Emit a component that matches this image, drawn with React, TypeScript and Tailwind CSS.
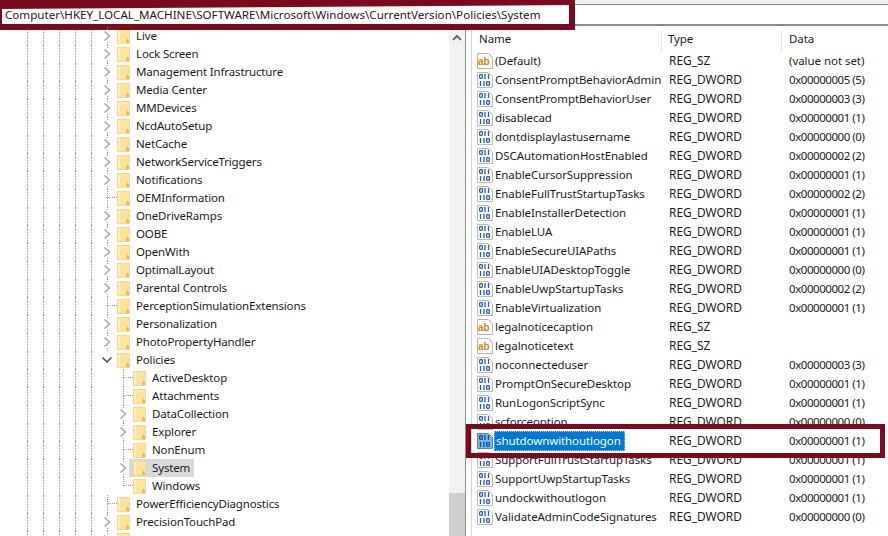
import React from "react";

const FONT = "font-['Noto_Sans','Open_Sans',sans-serif]";

function Folder() {
  return (
    <svg width="13" height="15" viewBox="0 0 13 15" className="shrink-0 block">
      <path d="M0.5 0.5H12.5V14.5H0.5Z" fill="#fce49c" stroke="#f5d88a" />
      <path d="M1 1H3V14H1Z" fill="#fdeec0" />
      <path d="M9 14V11H10V9.5H11V11H12V14Z" fill="#e6bb5c" />
    </svg>
  );
}

function Chevron({ down }: { down?: boolean }) {
  return (
    <svg width="10" height="10" viewBox="0 0 10 10" className="block bg-white">
      {down ? (
        <path d="M0.5 2.5L5 7L9.5 2.5" fill="none" stroke="#404040" strokeWidth="1.4" />
      ) : (
        <path d="M2.5 0.5L7.5 5L2.5 9.5" fill="none" stroke="#a0a0a0" strokeWidth="1.4" />
      )}
    </svg>
  );
}

function SzIcon() {
  return (
    <svg width="16" height="16" viewBox="0 0 16 16" className="block shrink-0">
      <path d="M0.5 0.5H11.5L15.5 4.5V15.5H0.5Z" fill="#fff" stroke="#b4b4b4" />
      <text x="1" y="11.5" fontSize="10" fontWeight="700" fill="#d9821e" fontFamily="Liberation Sans, sans-serif">ab</text>
    </svg>
  );
}

function BinIcon({ selected }: { selected?: boolean }) {
  const c = selected ? "#0f4f9c" : "#2a5cab";
  return (
    <svg width="16" height="16" viewBox="0 0 16 16" className="block shrink-0">
      <path d="M0.5 0.5H11.5L15.5 4.5V15.5H0.5Z" fill={selected ? "#7fb2e5" : "#fff"} stroke={selected ? "#4a8bd0" : "#b4bcc8"} />
      <g fill="none" stroke={c} strokeWidth="1.3">
        <rect x="2.65" y="2.65" width="2.7" height="3.7" rx="0.8" />
        <path d="M8 2V7M11.5 2V7" />
        <path d="M3.5 9V14M7 9V14" />
        <rect x="9.65" y="9.65" width="2.7" height="3.7" rx="0.8" />
      </g>
    </svg>
  );
}

type TreeRow = { name: string; kind: "chev" | "open" | "leaf"; child?: boolean; last?: boolean; selected?: boolean };

const tree: TreeRow[] = [
  { name: "Live", kind: "chev" },
  { name: "Lock Screen", kind: "chev" },
  { name: "Management Infrastructure", kind: "chev" },
  { name: "Media Center", kind: "chev" },
  { name: "MMDevices", kind: "chev" },
  { name: "NcdAutoSetup", kind: "chev" },
  { name: "NetCache", kind: "chev" },
  { name: "NetworkServiceTriggers", kind: "chev" },
  { name: "Notifications", kind: "chev" },
  { name: "OEMInformation", kind: "leaf" },
  { name: "OneDriveRamps", kind: "chev" },
  { name: "OOBE", kind: "chev" },
  { name: "OpenWith", kind: "chev" },
  { name: "OptimalLayout", kind: "chev" },
  { name: "Parental Controls", kind: "chev" },
  { name: "PerceptionSimulationExtensions", kind: "leaf" },
  { name: "Personalization", kind: "chev" },
  { name: "PhotoPropertyHandler", kind: "chev" },
  { name: "Policies", kind: "open" },
  { name: "ActiveDesktop", kind: "leaf", child: true },
  { name: "Attachments", kind: "leaf", child: true },
  { name: "DataCollection", kind: "chev", child: true },
  { name: "Explorer", kind: "chev", child: true },
  { name: "NonEnum", kind: "leaf", child: true },
  { name: "System", kind: "chev", child: true, selected: true },
  { name: "Windows", kind: "leaf", child: true, last: true },
  { name: "PowerEfficiencyDiagnostics", kind: "leaf" },
  { name: "PrecisionTouchPad", kind: "chev" },
  { name: "PreviewHandlers", kind: "chev" },
];

const values: [string, "sz" | "bin", string, string][] = [
  ["(Default)", "sz", "REG_SZ", "(value not set)"],
  ["ConsentPromptBehaviorAdmin", "bin", "REG_DWORD", "0x00000005 (5)"],
  ["ConsentPromptBehaviorUser", "bin", "REG_DWORD", "0x00000003 (3)"],
  ["disablecad", "bin", "REG_DWORD", "0x00000001 (1)"],
  ["dontdisplaylastusername", "bin", "REG_DWORD", "0x00000000 (0)"],
  ["DSCAutomationHostEnabled", "bin", "REG_DWORD", "0x00000002 (2)"],
  ["EnableCursorSuppression", "bin", "REG_DWORD", "0x00000001 (1)"],
  ["EnableFullTrustStartupTasks", "bin", "REG_DWORD", "0x00000002 (2)"],
  ["EnableInstallerDetection", "bin", "REG_DWORD", "0x00000001 (1)"],
  ["EnableLUA", "bin", "REG_DWORD", "0x00000001 (1)"],
  ["EnableSecureUIAPaths", "bin", "REG_DWORD", "0x00000001 (1)"],
  ["EnableUIADesktopToggle", "bin", "REG_DWORD", "0x00000000 (0)"],
  ["EnableUwpStartupTasks", "bin", "REG_DWORD", "0x00000002 (2)"],
  ["EnableVirtualization", "bin", "REG_DWORD", "0x00000001 (1)"],
  ["legalnoticecaption", "sz", "REG_SZ", ""],
  ["legalnoticetext", "sz", "REG_SZ", ""],
  ["noconnecteduser", "bin", "REG_DWORD", "0x00000003 (3)"],
  ["PromptOnSecureDesktop", "bin", "REG_DWORD", "0x00000001 (1)"],
  ["RunLogonScriptSync", "bin", "REG_DWORD", "0x00000001 (1)"],
  ["scforceoption", "bin", "REG_DWORD", "0x00000000 (0)"],
  ["shutdownwithoutlogon", "bin", "REG_DWORD", "0x00000001 (1)"],
  ["SupportFullTrustStartupTasks", "bin", "REG_DWORD", "0x00000001 (1)"],
  ["SupportUwpStartupTasks", "bin", "REG_DWORD", "0x00000001 (1)"],
  ["undockwithoutlogon", "bin", "REG_DWORD", "0x00000001 (1)"],
  ["ValidateAdminCodeSignatures", "bin", "REG_DWORD", "0x00000000 (0)"],
];

function Guide() {
  return <div className="w-4 h-full shrink-0 border-l border-dotted border-[#9a9a9a]" />;
}

function Connector({ kind, line, halfLine }: { kind: TreeRow["kind"]; line: boolean; halfLine?: boolean }) {
  return (
    <div className="w-4 h-full shrink-0 flex flex-col">
      <div className={`h-[9px] w-[10px] ${line ? "border-l border-dotted border-[#9a9a9a]" : ""} ${kind === "leaf" ? "border-b border-dotted border-b-[#9a9a9a]" : ""}`} />
      <div className={`flex-1 w-[10px] ${line && !halfLine ? "border-l border-dotted border-[#9a9a9a]" : ""}`} />
    </div>
  );
}

function Tree({ row }: { row: TreeRow }) {
  return (
    <div className="h-[18px] flex items-stretch pl-[27px] shrink-0">
      {Array.from({ length: 5 }).map((_, i) => (
        <Guide key={i} />
      ))}
      {row.child ? <div className="w-4 h-full shrink-0" /> : null}
      <div className="w-4 h-full shrink-0 relative">
        <Connector kind={row.kind} line={row.kind !== "open"} halfLine={row.last} />
        {row.kind !== "leaf" && (
          <div className="absolute left-[-5px] top-[4px]">
            <Chevron down={row.kind === "open"} />
          </div>
        )}
      </div>
      <div className={`flex items-center h-full ${row.selected ? "bg-[#d9d9d9] -ml-[10px] pl-[10px] pr-[4px]" : ""}`}>
        <div className="-ml-[6px] mr-[6px]">
          <Folder />
        </div>
        <span className="text-[11.5px] tracking-[-0.15px] leading-[18px] text-[#1a1a1a] whitespace-nowrap">{row.name}</span>
      </div>
    </div>
  );
}

export default function App() {
  return (
    <div className={`w-[888px] h-[536px] overflow-hidden bg-white relative flex flex-col ${FONT}`}>
      <div className="h-[30px] shrink-0 bg-white relative">
        <div className="h-[5px] bg-[#f0f0f0] border-b border-[#8a8a8a]" />
        <div className="h-[19px]" />
        <div className="h-[2px] bg-[#8a8a8a]" />
        <div className="absolute left-0 top-0 w-[575px] h-[30px] border-[#7a0a1e] border-t-[5px] border-r-[6px] border-b-[6px] border-l-[2px] bg-white pl-[3px] flex items-center">
          <span className="text-[11.6px] leading-[19px] text-[#1a1a1a] whitespace-nowrap">
            Computer\HKEY_LOCAL_MACHINE\SOFTWARE\Microsoft\Windows\CurrentVersion\Policies\System
          </span>
        </div>
        <svg width="575" height="9" viewBox="0 0 575 9" className="absolute left-0 top-0 block">
          <polygon points="0,0 575,0 575,5 0,9" fill="#7a0a1e" />
        </svg>
      </div>

      <div className="flex-1 flex min-h-0">
        <div className="w-[449px] shrink-0 overflow-hidden flex flex-col -mt-[3px]">
          {tree.map((r) => (
            <Tree key={r.name} row={r} />
          ))}
        </div>

        <div className="w-[16px] shrink-0 bg-[#f1f1f1] flex flex-col">
          <div className="h-[16px] flex items-center justify-center">
            <svg width="10" height="8" viewBox="0 0 10 8">
              <path d="M1 6L5 2L9 6" fill="none" stroke="#505050" strokeWidth="1.6" />
            </svg>
          </div>
          <div className="flex-1" />
          <div className="h-[43px] bg-[#cfcfcf]" />
        </div>

        <div className="w-[7px] shrink-0 bg-white border-l border-[#8f8f8f] border-r-1 border-r-[#d4d4d4]" />

        <div className="flex-1 min-w-0 flex flex-col text-[11.5px] tracking-[-0.08px] text-[#1a1a1a]">
          <div className="h-[21px] shrink-0 flex items-stretch">
            <div className="w-[190px] pl-[7px] h-full flex items-center pb-[4px] border-r border-[#e5e5e5]">Name</div>
            <div className="w-[120px] pl-[6px] h-full flex items-center pb-[4px] border-r border-[#e5e5e5]">Type</div>
            <div className="pl-[7px] h-full flex items-center pb-[4px]">Data</div>
          </div>
          {values.map(([name, kind, type, data]) => {
            const sel = name === "shutdownwithoutlogon";
            return (
              <div key={name} className="h-[19px] shrink-0 flex items-center">
                <div className="w-[190px] pl-[5px] flex items-center shrink-0">
                  {kind === "sz" ? <SzIcon /> : <BinIcon selected={sel} />}
                  {sel ? (
                    <span className="ml-[1px] pl-[1px] pr-[3px] h-[20px] leading-[18px] bg-[#0078d7] text-white border border-dotted border-[#9cc8ee]">
                      {name}
                    </span>
                  ) : (
                    <span className="ml-[2px] whitespace-nowrap">{name}</span>
                  )}
                </div>
                <div className="w-[120px] pl-[7px] shrink-0 text-[11.9px] tracking-normal">{type}</div>
                <div className={`pl-[7px] whitespace-nowrap ${data.startsWith("0x") ? "tracking-[-0.45px]" : "tracking-[-0.05px]"}`}>{data}</div>
              </div>
            );
          })}
        </div>
      </div>

      <div className="absolute left-[466px] top-[424px] w-[419px] h-[34px] border-[5px] border-[#7a0a1e]" />
    </div>
  );
}
